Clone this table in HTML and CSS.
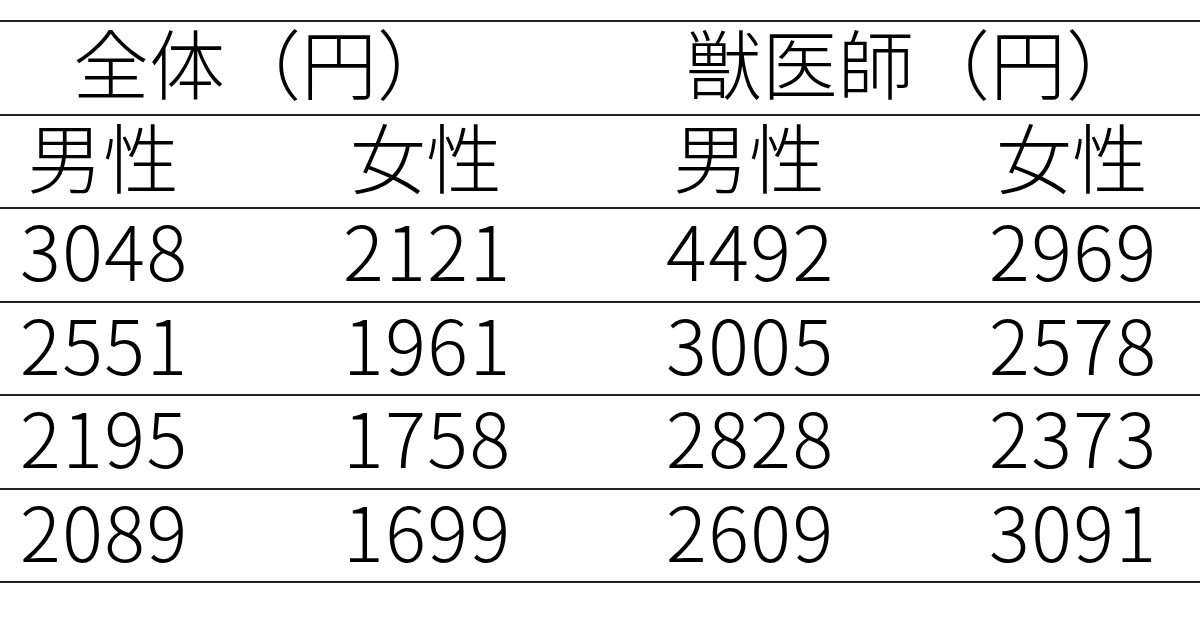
FILE: index.html
```html
<!DOCTYPE html>
<html lang="ja">
<head>
<meta charset="utf-8">
<link rel="stylesheet" href="styles.css">
</head>
<body>
<div class="table">
  <div class="row">
    <div class="cell span2 head-all">全体（円）</div>
    <div class="cell span2 head-vet">獣医師（円）</div>
  </div>
  <div class="row sub">
    <div class="cell">男性</div>
    <div class="cell">女性</div>
    <div class="cell">男性</div>
    <div class="cell">女性</div>
  </div>
  <div class="row num">
    <div class="cell">3048</div>
    <div class="cell">2121</div>
    <div class="cell">4492</div>
    <div class="cell">2969</div>
  </div>
  <div class="row num">
    <div class="cell">2551</div>
    <div class="cell">1961</div>
    <div class="cell">3005</div>
    <div class="cell">2578</div>
  </div>
  <div class="row num">
    <div class="cell">2195</div>
    <div class="cell">1758</div>
    <div class="cell">2828</div>
    <div class="cell">2373</div>
  </div>
  <div class="row num last">
    <div class="cell">2089</div>
    <div class="cell">1699</div>
    <div class="cell">2609</div>
    <div class="cell">3091</div>
  </div>
</div>
</body>
</html>
```

FILE: styles.css
```css
html, body {
  margin: 0;
  padding: 0;
  background: #ffffff;
  width: 1200px;
  height: 628px;
  overflow: hidden;
}

.table {
  padding-top: 20px;
  font-family: "Noto Sans CJK JP", "Noto Sans", sans-serif;
  font-weight: 300;
  font-size: 76px;
  color: #000;
}

.row {
  display: grid;
  grid-template-columns: 323px 323px 323px 231px;
  height: 91.5px;
  border-top: 2px solid #222;
  align-items: center;
}

.row.last {
  border-bottom: 2px solid #222;
}

.cell {
  line-height: 1;
  padding-left: 20px;
  padding-bottom: 13px;
  white-space: nowrap;
}

.num .cell {
  letter-spacing: 1.5px;
}

.span2 {
  grid-column: span 2;
}

.head-all {
  padding-left: 73px;
}

.head-vet {
  padding-left: 40px;
}

.sub .cell {
  padding-left: 27px;
}
```
